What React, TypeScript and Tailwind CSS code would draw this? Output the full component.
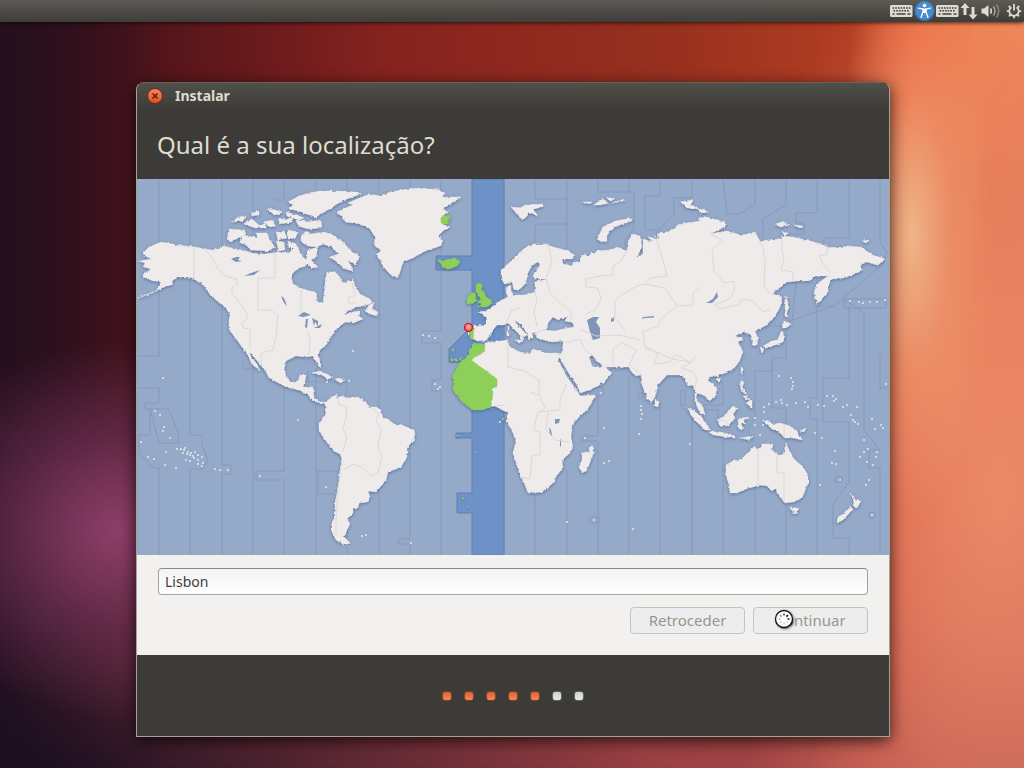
import React from "react";

const seaZones: string[] = [
  "M137,356H159V179M137,388H159V403H145V409H150L159,443H179L178,431L168,409H150V435H139V454L154,468H159V555",
  "M190,179V435H202V445L208,460L202,469H190V555M222,179V465H231V474H222V555M253,179V555",
  "M284,179V200H275M284,361V471H256V480H284V555M316,179V190M316,368V555M243,360V369H252",
  "M347,179V190M347,381V393M347,471H318V494H336M347,503V555M379,179V190M379,240V410M379,480V555",
  "M410,179V190M410,262V432M410,448V539H398V544H410V555M441,179V190M441,240V331H422V343H441V380H432V391H441V555",
  "M504,179V257M504,410V555M535,179V199H567V179M535,243V224H567V250M567,199V224M535,493V555M567,470V555",
  "M598,179V192H634V229L625,240V247M598,393V436H582V441H598V555M629,179V192M629,375V555",
  "M660,179V196H645V230H656V238M692,179V198H674V214L658,231M660,400V555M692,405V555",
  "M723,179L727,214H740L755,204V179M786,179V205L763,219V238M817,179V213H796V223H804V234H784V238",
  "M849,179V238H824V243M880,179V243L887,252L884,263L834,306H817V279M796,281L792,321",
  "M787,322L834,306M844,299H886V308H844ZM844,299L864,313V398",
  "M723,382V405H700M755,371V417L748,430L755,443M755,371H772V358H786V324M786,408V430M772,360V408H786",
  "M817,306V398H810V419H817V555M849,306V378H823V422H849V482L833,505V538H849V555M864,398V430L880,450H869V468H880V555M880,355V388H889",
  "M786,446V555M755,485V555M723,440V555M681,390H685V405H681V390M680,405L692,416V555M706,410H718V420M744,326L784,326",
  "M587,387H603V396H587ZM638,393H643V398H638ZM590,517H599V523H590ZM835,477H842V482H835ZM869,513H875V518H869Z",
  "M308,371V382H347",
];

const highlight =
  "M472,179H504V340H479L472,350V362H449V349L472,326V270H436V256H472ZM472,400H504V555H472V513H457V493H472V438H456V433H472Z";

const land: string[] = [
  "M161,242L168,243L176,245L186,246L196,247L204,249L214,250L223,246L232,248L246,251L251,253L263,254L283,252L289,253L294,248L298,247L300,253L303,257L308,261L306,266L299,268L294,272L291,276L293,284L303,289L310,291L316,292L317,302L323,303L324,294L325,282L327,272L335,272L340,277L342,282L347,283L353,279L355,286L360,294L370,299L372,303L367,305L357,307L348,311L343,316L353,311L360,312L359,316L363,319L353,323L345,322L335,331L331,337L327,344L320,350L318,356L321,364L320,368L317,363L313,356L305,357L296,356L286,361L284,365L286,377L291,382L298,381L300,375L306,375L305,381L303,387L313,387L314,397L319,402L328,402L325,404L313,401L308,395L298,390L286,387L269,378L266,372L259,363L253,356L249,352L252,358L257,364L260,371L253,365L249,358L246,352L236,339L229,329L229,320L230,312L221,304L211,296L204,286L198,281L193,279L179,277L173,280L171,285L166,286L161,289L149,294L138,298L156,291L161,282L153,281L148,279L143,277L145,273L151,269L143,267L145,263L139,261L151,259L142,254L149,247Z",
  "M325,404L328,400L336,394L338,398L341,396L350,398L359,397L366,402L369,407L376,407L381,410L383,418L388,419L394,424L402,425L409,428L414,430L415,434L413,442L407,448L407,457L401,467L388,472L386,480L381,486L376,492L368,491L370,497L368,502L359,503L358,508L353,508L353,513L347,519L350,524L346,532L344,537L351,543L344,545L336,540L332,532L332,522L335,517L335,503L338,487L340,470L342,460L341,456L331,448L324,438L319,431L319,423L326,413Z",
  "M337,212L352,205L348,203L357,199L370,194L380,196L390,192L407,189L420,188L440,190L445,193L442,197L462,197L453,202L443,209L448,212L442,216L449,219L442,224L450,227L443,231L438,236L443,241L440,246L423,252L413,258L403,262L400,272L398,278L392,276L388,272L383,266L377,254L380,249L374,246L375,237L370,229L360,224L345,222L342,217Z",
  "M288,202L299,196L309,193L320,191L337,191L357,192L361,194L347,199L337,204L327,211L320,214L316,219L313,216L306,214L299,211L289,209L293,205Z",
  "M296,220L308,222L321,220L322,228L308,229L298,226Z",
  "M229,229L244,230L246,234L238,238L231,242L227,239Z",
  "M243,235L258,238L256,233L268,233L269,239L275,247L268,251L251,250L246,245L239,242Z",
  "M244,224L252,219L259,225L266,224L266,228L255,228Z",
  "M232,222L238,217L246,216L243,221Z",
  "M251,213L259,211L259,215L252,216Z",
  "M268,209L275,210L281,212L279,215L271,213Z",
  "M264,222L272,220L276,226L270,227Z",
  "M278,218L286,220L293,216L292,222L280,224Z",
  "M286,212L297,215L304,218L299,220L287,216Z",
  "M276,232L284,231L287,238L278,240Z",
  "M288,230L298,232L295,239L288,238Z",
  "M288,241L296,244L297,248L289,248Z",
  "M276,241L284,242L285,250L279,251Z",
  "M301,236L306,231L312,234L323,232L332,234L343,242L352,252L360,257L355,264L348,260L353,271L345,269L337,262L330,257L338,254L332,247L323,244L317,247L308,246L301,242Z",
  "M308,250L318,247L316,257L311,260L318,267L312,268L306,262Z",
  "M365,311L369,305L374,303L372,309L378,312L377,316L370,314Z",
  "M312,373L320,371L333,377L328,379L320,374Z",
  "M335,379L339,378L345,381L340,383Z",
  "M473,325L485,326L487,319L483,315L479,312L485,311L492,307L498,302L508,297L506,292L507,287L511,285L511,292L515,295L527,295L535,292L535,282L548,279L535,279L533,275L540,265L538,262L532,265L528,273L526,283L520,289L514,290L512,282L505,284L501,278L501,270L510,262L516,256L522,250L533,244L547,244L553,247L570,251L574,255L572,259L562,259L563,264L572,266L573,263L580,261L582,254L588,256L597,251L610,250L617,247L627,251L628,241L633,234L640,236L642,247L637,257L643,254L643,239L653,242L648,237L660,239L657,234L670,231L680,224L700,221L698,218L707,217L725,222L725,227L710,234L725,231L743,235L755,232L760,242L767,240L780,239L782,236L793,237L810,241L822,244L827,247L842,248L847,246L860,247L873,255L885,259L878,265L867,262L860,265L863,270L855,274L843,278L832,279L828,286L828,292L817,304L814,292L817,284L828,276L815,276L810,281L797,281L787,282L778,289L772,294L782,297L780,307L775,317L765,326L755,331L758,339L757,345L753,345L750,334L743,332L735,336L743,339L738,342L743,352L739,362L735,367L728,372L717,376L709,377L708,380L717,388L715,397L709,401L705,396L697,393L696,398L703,407L705,415L700,413L695,402L695,392L693,385L688,386L685,380L682,375L667,375L658,385L655,397L651,403L647,397L642,385L641,375L635,376L628,367L607,367L598,362L592,355L589,357L593,367L600,368L603,364L607,369L612,373L603,383L590,390L580,393L577,385L568,372L559,357L563,350L563,341L552,342L537,338L535,333L545,330L555,331L563,329L574,327L573,323L565,321L567,317L558,320L553,317L548,323L547,329L537,332L532,333L533,338L529,340L527,333L523,327L515,320L516,323L527,335L522,337L524,338L522,342L520,335L512,327L508,323L503,325L497,325L493,330L487,340L477,341L473,339Z",
  "M485,343L508,340L510,347L520,352L530,354L533,349L545,353L557,353L562,354L558,360L567,377L578,392L580,396L595,395L592,402L587,410L580,416L572,425L571,438L573,447L570,453L562,460L563,468L557,475L553,483L543,492L528,493L525,485L520,475L513,453L516,442L513,433L507,422L508,412L502,410L495,406L488,407L480,390L466,360L483,350Z",
  "M592,445L594,452L587,470L582,473L579,467L582,460L582,453L588,452Z",
  "M511,207L520,208L525,205L543,204L543,207L533,209L538,216L530,213L523,220L517,214Z",
  "M597,239L603,227L615,221L632,218L632,221L617,226L607,234L607,242L600,241Z",
  "M583,202L592,202L590,204ZM593,205L603,199L609,203L601,205ZM607,197L615,199L610,201ZM612,203L625,199L624,201Z",
  "M680,202L692,200L691,205L697,207L700,213L708,212L703,209L687,208Z",
  "M775,224L782,222L790,225L780,227ZM794,225L803,226L800,228ZM782,232L788,233L785,235ZM862,241L869,240L866,243Z",
  "M786,296L789,307L787,312L788,317L785,316L785,306Z",
  "M784,321L791,324L786,328L782,328Z",
  "M782,331L785,336L783,342L772,346L767,348L763,346L772,341L777,340Z",
  "M760,347L764,349L762,353ZM741,367L744,368L741,374ZM716,379L721,378L719,382Z",
  "M687,408L693,410L703,418L710,430L705,430L695,420Z",
  "M709,432L720,432L735,436L735,438L713,435ZM740,438L753,436L750,440Z",
  "M717,420L723,417L733,406L737,408L733,415L735,418L729,426L720,426Z",
  "M738,420L741,418L749,417L743,421L746,424L741,423L743,429L739,429Z",
  "M763,420L770,421L773,424L780,423L790,426L797,431L797,435L803,440L793,438L785,438L780,433L772,429L766,424Z",
  "M740,381L744,382L742,388L748,394L745,394L741,390ZM746,403L752,400L752,408ZM743,396L748,396L747,400Z",
  "M655,399L659,402L658,407L655,406Z",
  "M726,465L733,461L742,459L748,452L754,447L760,449L762,444L773,444L772,450L778,455L783,455L786,443L788,448L793,458L803,467L808,475L808,483L802,498L793,502L785,503L780,497L777,493L776,488L772,491L767,486L760,485L753,487L746,489L737,493L730,493L729,485L726,475Z",
  "M790,507L795,508L799,507L797,513L794,514Z",
  "M851,493L855,500L861,501L857,508L853,506L854,502ZM850,507L853,509L843,520L837,522L838,517L845,513Z",
  "M508,326h1v4h-1zM507,331h2v5h-2zM515,340L522,340L520,343ZM800,431L806,428L804,432Z",
];

const green: string[] = [
  "M475,343L485,345L485,351L471,360L497,379L497,387L490,389L493,393L491,407L482,410L473,410L462,402L453,390L453,375L460,363L468,355L470,348Z",
  "M476,285L479,283L483,285L481,289L484,292L486,297L491,300L492,304L486,307L477,307L482,304L478,302L481,299L478,295L476,292Z",
  "M467,298L470,294L475,292L476,301L472,304L467,304Z",
  "M438,259L443,261L449,259L455,258L460,262L457,266L450,269L442,267Z",
  "M469,328L474,328L473,339L470,339Z",
  "M441,217L449,215L450,219L447,222L449,224L441,224Z",
  "M450,359h3v2h-3zM455,359h2v2h-2zM459,359l3,-2l-1,3zM452,349h2v2h-2zM457,435h2v1h-2zM475,452h2v1h-2zM462,498h2v1h-2zM468,506h1v1h-1zM502,418h2v2h-2z",
];

const lakes: string[] = [
  "M587,320L593,317L599,317L596,322L600,328L600,338L593,340L590,332Z",
  "M298,316L304,312L311,315L303,317Z",
  "M306,319L308,319L307,328L305,327Z",
  "M312,318L318,321L318,326L315,322L314,326Z",
  "M314,328L322,324L320,328Z",
  "M281,296L284,298L287,306L284,303Z",
  "M231,259L236,257L240,257L238,260L242,261L236,262Z",
  "M244,276L251,273L260,270L254,275Z",
  "M555,419L560,419L559,423L555,424Z",
  "M549,427L551,430L552,436L550,434Z",
  "M560,439L561,440L561,447L560,446Z",
  "M706,303L713,299L717,292L718,297L712,303Z",
  "M642,319L643,317L654,316L654,317.500L645,318Z",
  "M611,319L614,317L614,321L611,322Z",
];

const landZones: string[] = [
  "M194,247V278M204,249L212,257L218,269L225,276L237,279V285L232,287V293L240,303L246,312L248,318L242,323L243,328L250,329V348",
  "M275,253V278H258V310H271L278,316L276,337L273,350L261,353V366M301,290V313M307,330L310,338L309,355M352,282L355,296L348,297L349,303L356,303",
  "M336,395L340,405L347,407L346,418L343,428L347,437L343,451M342,460L338,490L336,520V535M343,470L354,464L362,467L371,476L378,473L382,457L378,445L381,430L376,420L379,414L368,405",
  "M535,292L537,300L534,312L537,326M548,243L552,262L546,278L550,293L560,303L571,311V321M505,325L512,310L520,308M600,251L610,250M627,251L620,262L613,266V275L600,276L586,279V287L598,288L601,299L595,310L586,314",
  "M655,235L663,260L667,276L650,278L645,284L637,286L620,296L615,301V318L627,333M645,284L665,288L677,306L693,305V293L700,287",
  "M710,234L722,240L712,250L714,271L724,283L733,281L735,288L731,298L715,305L718,309L738,305L742,299L753,301L763,312L770,310M755,232L763,247L765,261L764,285L770,294M782,240V250L784,260L781,270L793,272V280M827,247V255H819L823,264L830,273",
  "M677,306L660,320L658,326L643,332L645,348L656,352L672,359L691,362L696,356M580,329L596,336L620,335L640,340M563,343L580,339L585,350L592,355M613,366V349L622,343L636,350L629,365L642,375",
  "M646,347L658,353L654,364L670,362L675,355L683,358L690,363L681,368L691,371L697,378L694,390M508,342V367L524,371L539,380V395L545,408L537,414L534,430L540,432V455H532L530,478H520",
  "M538,412L548,411L560,410V400L566,385M548,411L546,430L555,440L570,442M530,392L539,395M758,448V485M777,452V473H784V502M495,406L505,405",
  "M784,425V438M717,420L727,421V426",
];

const dots: [number, number][] = [
  [155, 411], [160, 415], [164, 427], [163, 431], [170, 438], [141, 442], [148, 457], [154, 459], [165, 465], [176, 468],
  [166, 452], [177, 449], [181, 449], [184, 450], [183, 453], [187, 454], [190, 455], [193, 456], [195, 452], [198, 455],
  [202, 457], [186, 460], [190, 461], [194, 458], [198, 464], [203, 463], [202, 466], [185, 448], [215, 469], [220, 470], [228, 470],
  [188, 452], [191, 453], [198, 460], [260, 476], [163, 378], [423, 335], [429, 336], [435, 338], [353, 351], [327, 382], [349, 381],
  [435, 384], [440, 387], [438, 389], [298, 420], [362, 536], [366, 535], [411, 543], [326, 487], [500, 422], [601, 393], [604, 428], [585, 438],
  [604, 463], [609, 461], [567, 522], [594, 520], [633, 529], [641, 406], [641, 410], [642, 414], [641, 419], [639, 434], [690, 444],
  [779, 376], [791, 378], [793, 382], [792, 389], [793, 386], [769, 404], [776, 402], [781, 400], [782, 403], [787, 405], [796, 403], [805, 402], [808, 407],
  [818, 405], [824, 406], [827, 396], [833, 396], [836, 399], [834, 401], [843, 407], [847, 405], [857, 407], [851, 415], [853, 420], [855, 422], [858, 424],
  [872, 419], [875, 429], [881, 425], [883, 428], [864, 440], [868, 449], [860, 457], [864, 452], [877, 452], [876, 457], [873, 465],
  [867, 462], [866, 485], [869, 480], [832, 463], [836, 464], [840, 480], [820, 485], [872, 515], [850, 301], [859, 302], [863, 303],
  [870, 302], [877, 302], [885, 300], [886, 384], [835, 451], [815, 433], [822, 438], [764, 407], [764, 412], [755, 418],
  [749, 399], [755, 425], [763, 425], [760, 435],
];

function WorldMap() {
  return (
    <svg viewBox="137 179 752 376" role="img" aria-label="Mapa de fusos horários" className="block w-full">
      <defs>
        <filter id="coast" x="0" y="0" width="100%" height="100%" colorInterpolationFilters="sRGB">
          <feTurbulence type="fractalNoise" baseFrequency="0.3" numOctaves="2" seed="4" result="noise" />
          <feDisplacementMap in="SourceGraphic" in2="noise" scale="3" xChannelSelector="R" yChannelSelector="G" result="rough" />
          <feDropShadow in="rough" dx="0" dy="1" stdDeviation="1.6" floodColor="#3c5482" floodOpacity="0.7" />
        </filter>
        <radialGradient id="pin" cx="0.5" cy="0.4" r="0.6">
          <stop offset="0" stopColor="#ffb6b6" />
          <stop offset="1" stopColor="#e8474c" />
        </radialGradient>
      </defs>
      <rect x="137" y="179" width="752" height="376" fill="#95a9c9" />
      <path d={seaZones.join("")} fill="none" stroke="#8699bd" strokeWidth="1" />
      <path d={highlight} fill="#6e92c8" stroke="#627eae" strokeWidth="1" />
      <path d="M493,330L504,325V340H487Z" fill="#6e92c8" />
      <g filter="url(#coast)">
        <path d={land.join("")} fill="#eeebea" stroke="#eeebea" strokeWidth="0.500" />
        <path d={green.join("")} fill="#8dcf58" stroke="#8dcf58" strokeWidth="0.500" />
      </g>
      <path d={lakes.join("")} fill="#7e94b9" />
      <path d={landZones.join("")} fill="none" stroke="#dbd8d7" strokeWidth="1" strokeLinejoin="round" />
      <g fill="#dfe3e9">
        {dots.map(([x, y]) => (
          <rect key={`${x}-${y}`} x={x - 1} y={y - 1} width="2" height="2" rx="0.8" />
        ))}
      </g>
      <path d="M468.500,330V335" stroke="#dfe3ea" strokeWidth="1" />
      <circle cx="468.500" cy="327.500" r="4" fill="url(#pin)" stroke="#c4161d" strokeWidth="1.200" />
    </svg>
  );
}

function KeyboardIcon() {
  return (
    <svg viewBox="0 0 24 14" className="h-3.5 w-6" aria-hidden="true">
      <rect x="0" y="1" width="22.500" height="12" rx="1.500" fill="#dfdbd2" />
      <g stroke="#45443f" strokeWidth="1.500">
        <path d="M2.500,4H20.500M3.500,6.700H19.500" strokeDasharray="1.700 1" />
        <path d="M2.500,10H4.500M6.500,10H15.500M17.500,10H20.500" />
      </g>
    </svg>
  );
}

function TopBar() {
  return (
    <header className="relative z-10 flex h-[22px] items-center justify-end bg-linear-to-b from-[#5d5b55] to-[#3e3d39] pr-0.5 shadow-[0_1px_4px_rgba(0,0,0,0.7)]">
      <button type="button" aria-label="Teclado" className="flex w-6 items-center"><KeyboardIcon /></button>
      <button type="button" aria-label="Acessibilidade" className="flex w-[22px] items-center justify-center">
        <svg viewBox="0 0 22 22" className="size-[22px] shrink-0" aria-hidden="true">
          <circle cx="10.500" cy="11" r="10.300" fill="#2f6cab" />
          <circle cx="10.500" cy="10.500" r="9.200" fill="#4a8bc9" />
          <circle cx="10.500" cy="5.500" r="1.800" fill="#fff" />
          <path d="M4.500,8.200L9,9V12L7,17.500M16.500,8.200L12,9V12L14,17.500" fill="none" stroke="#fff" strokeWidth="1.300" strokeLinecap="round" />
          <path d="M8.800,8.500h3.400v4.500h-3.400z" fill="#fff" />
        </svg>
      </button>
      <button type="button" aria-label="Disposição do teclado" className="flex w-6 items-center"><KeyboardIcon /></button>
      <button type="button" aria-label="Rede" className="flex w-5 items-center">
        <svg viewBox="0 0 20 18" className="h-[18px] w-5" fill="#dfdbd2" aria-hidden="true">
          <path d="M5,1L9.500,6H6.500V13H3.500V6H0.500ZM13,17.500L8.500,12.500H11.500V5H14.500V12.500H17.500Z" />
        </svg>
      </button>
      <button type="button" aria-label="Som" className="flex w-[26px] items-center">
        <svg viewBox="0 0 24 18" className="h-[18px] w-6" aria-hidden="true">
          <path d="M1.500,6.500H4L8.500,3V15L4,11.500H1.500Z" fill="#dfdbd2" />
          <g fill="none" strokeWidth="1.500">
            <path d="M10.500,6.500Q12.300,9 10.500,11.500" stroke="#dfdbd2" />
            <path d="M13.500,4.500Q16.500,9 13.500,13.500" stroke="#a9a69f" />
            <path d="M16.500,2.500Q21,9 16.500,15.500" stroke="#8a8781" />
          </g>
        </svg>
      </button>
      <button type="button" aria-label="Sistema" className="flex w-4 items-center">
        <svg viewBox="0 0 16 16" className="size-4" fill="none" stroke="#dfdbd2" aria-hidden="true">
          <path d="M5.400,4.200A4.700,4.700 0 1 0 10.600,4.200" strokeWidth="1.800" />
          <path d="M8,1V7.500" strokeWidth="1.800" />
          <path d="M3.200,8.200H0.800M15.200,8.200H12.800M4.600,11.700L2.900,13.400M11.400,11.700L13.100,13.400M4.300,4.500L2.800,3M11.700,4.500L13.200,3M8,13V15.300" strokeWidth="1.800" />
        </svg>
      </button>
    </header>
  );
}

const spokes = [0, 45, 90, 135, 180, 225, 270, 315];
const spokeShades = ["#555", "#111", "#333", "#ddd", "#ccc", "#ccc", "#bbb", "#999"];

function BusyCursor() {
  return (
    <svg viewBox="0 0 20 20" className="absolute top-px left-5 size-5 drop-shadow-[1px_1px_1px_rgba(0,0,0,0.5)]" aria-hidden="true">
      <circle cx="10" cy="10" r="8.500" fill="#fff" stroke="#111" strokeWidth="1.300" />
      {spokes.map((a, i) => (
        <path key={a} d="M10,4.500V6.500" stroke={spokeShades[i]} strokeWidth="1.700" transform={`rotate(${a} 10 10)`} />
      ))}
    </svg>
  );
}

const steps = [true, true, true, true, true, false, false];
const buttonClass =
  "relative h-[27px] w-[115px] rounded border border-[#c5c3c0] bg-[#ededed] pb-0.5 text-[15px] leading-5 text-[#9b958e]";

export default function App() {
  return (
    <div className="min-h-screen bg-[linear-gradient(93deg,transparent_80%,#f0643a_86%,#f48a54_92%,#f08c5e_100%),linear-gradient(90deg,#260f1d,#40121b_9%,#5e171b_20%,#86231f_38%,#97301f_65%,#b03c22_82%)] font-['Noto_Sans','Open_Sans',sans-serif]">
      <div className="flex min-h-screen flex-col bg-[radial-gradient(ellipse_220px_190px_at_120px_530px,rgba(144,64,108,0.95),rgba(115,50,90,0.6)_50%,transparent),radial-gradient(ellipse_80px_280px_at_912px_235px,rgba(240,188,142,0.9),rgba(240,165,120,0.4)_50%,transparent),linear-gradient(20deg,rgba(28,15,32,0.95)_2%,rgba(28,15,32,0.6)_9%,transparent_22%),linear-gradient(90deg,rgba(38,15,29,0.9),transparent_16%),radial-gradient(ellipse_280px_600px_at_1000px_500px,rgba(236,138,106,0.85),rgba(222,118,94,0.6)_50%,transparent),linear-gradient(0deg,rgba(160,72,82,0.75),rgba(170,76,80,0.4)_22%,transparent_50%)]">
        <TopBar />
        <main className="flex grow items-start justify-center pt-[60px] pb-[31px] pl-0.5">
          <section aria-labelledby="window-title" className="w-full max-w-[754px] overflow-hidden rounded-t-lg border border-[#a5a29a] border-t-[#65635d] bg-[#3c3b37] shadow-[0_4px_16px_rgba(0,0,0,0.75)]">
            <div className="flex h-7 items-center gap-3 bg-linear-to-b from-[#504f49] to-[#3c3b37] px-2.5 pb-0.5">
              <button type="button" aria-label="Fechar" className="flex size-4 items-center justify-center rounded-full border border-[#6b2d18] bg-linear-to-b from-[#f58464] to-[#e24e1b]">
                <svg viewBox="0 0 8 8" className="size-2" aria-hidden="true">
                  <path d="M1.500,1.500L6.500,6.500M6.500,1.500L1.500,6.500" stroke="#4b1d0d" strokeWidth="1.300" />
                </svg>
              </button>
              <span id="window-title" className="text-sm leading-5 font-bold text-[#dfdbd2]">Instalar</span>
            </div>
            <h1 className="px-5 pt-[18px] pb-[18px] text-2xl leading-8 font-normal text-[#dfdbd2]">Qual é a sua localização?</h1>
            <WorldMap />
            <form className="bg-[#f2f1f0] px-[21px] pt-[13px] pb-[21px]" onSubmit={(e: React.FormEvent) => e.preventDefault()}>
              <input
                aria-label="Localização"
                defaultValue="Lisbon"
                className="block h-[27px] w-full rounded border border-[#a4a29f] border-t-[#8c8a87] bg-linear-to-b from-[#f3f3f3] to-white px-1.5 text-sm text-[#3c3c3c] outline-none"
              />
              <div className="mt-3 flex justify-end gap-2">
                <button type="button" disabled className={buttonClass}>Retroceder</button>
                <button type="submit" disabled className={buttonClass}>
                  Continuar
                  <BusyCursor />
                </button>
              </div>
            </form>
            <div className="flex h-[81px] items-center justify-center gap-3">
              {steps.map((done, i) => (
                <span
                  key={i}
                  className={
                    done
                      ? "size-2.5 rounded-[3px] border border-[#7b3f2a] bg-linear-to-b from-[#e55a28] to-[#ea8a65]"
                      : "size-2.5 rounded-[3px] border border-[#62615d] bg-linear-to-b from-[#d2d2d0] to-[#e8e8e6]"
                  }
                />
              ))}
            </div>
          </section>
        </main>
      </div>
    </div>
  );
}
